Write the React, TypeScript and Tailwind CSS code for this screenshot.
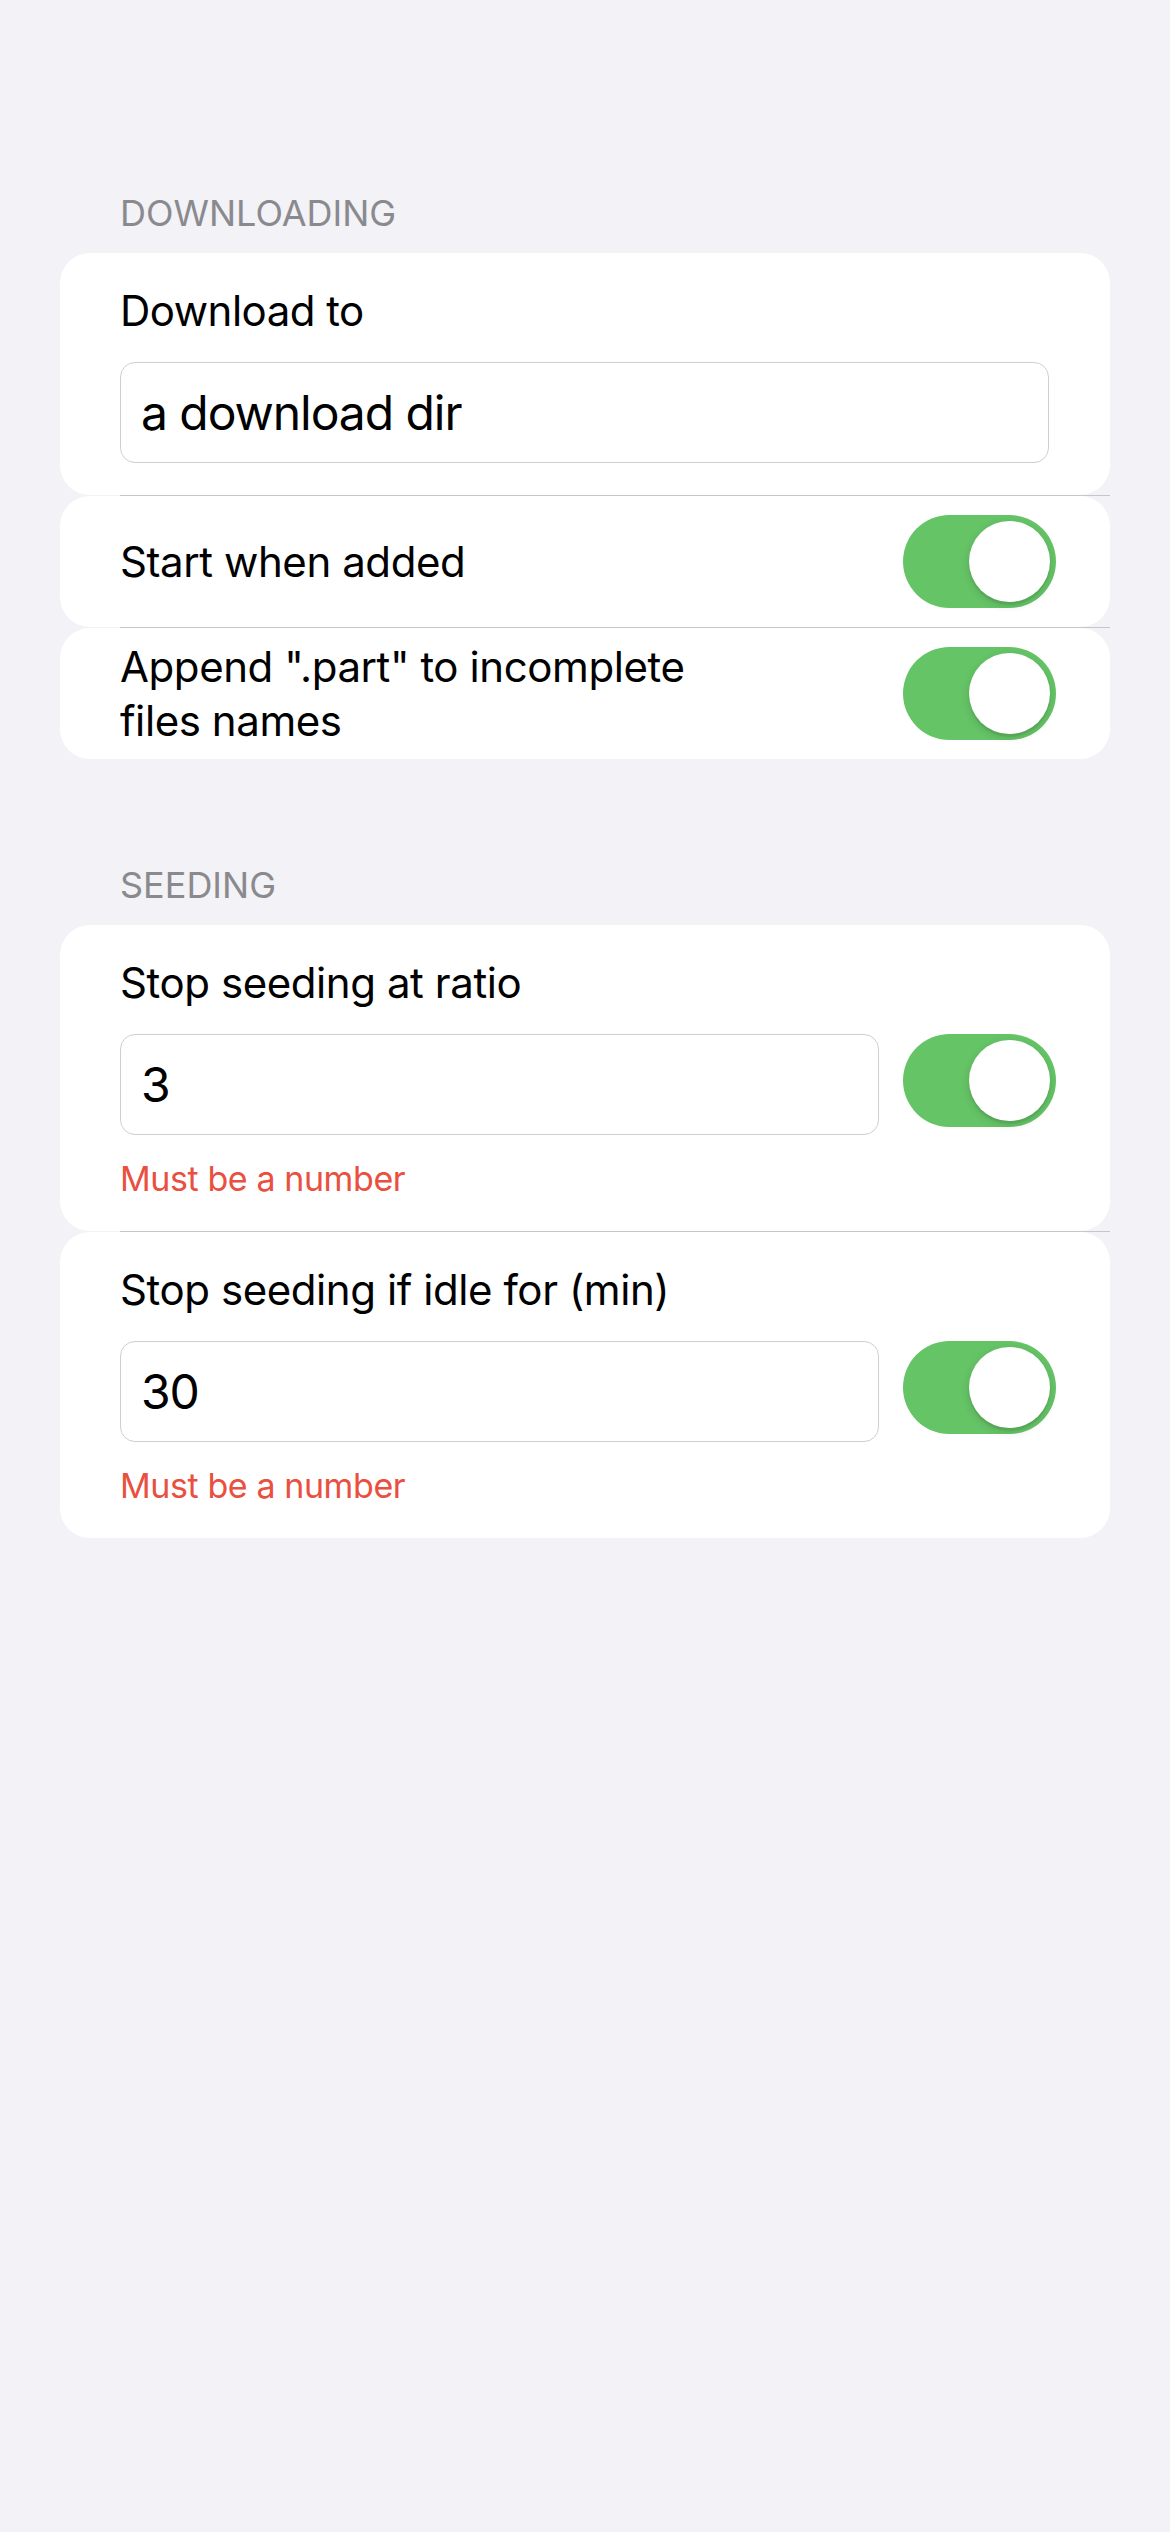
import React from 'react';

const FONT = "font-['Inter','Noto_Sans',sans-serif]";

function SectionHeader({ title }: { title: string }) {
    return (
        <div className="pl-[60px] mb-[18px] text-[36px] leading-[44px] text-[#8a8a8e] uppercase">
            {title}
        </div>
    );
}

function Separator() {
    return <div className="h-px ml-[60px] bg-[#c6c6c8]" />;
}

function Toggle() {
    return (
        <div className="w-[153px] h-[93px] shrink-0 rounded-full bg-[#65c466] p-[6px] flex justify-end">
            <div className="w-[81px] h-[81px] rounded-full bg-white shadow-[0_3px_8px_rgba(0,0,0,0.15),0_3px_1px_rgba(0,0,0,0.06)]" />
        </div>
    );
}

function TextBox({ value, className = '' }: { value: string; className?: string }) {
    return (
        <div
            className={`h-[101px] rounded-[15px] border border-[#cfcfd3] px-[20px] flex items-center text-[48px] leading-[58px] tracking-[-0.022em] text-black ${className}`}
        >
            {value}
        </div>
    );
}

function SwitchRow({ label }: { label: string }) {
    return (
        <div className="h-[131px] rounded-[30px] bg-white pl-[60px] pr-[54px] flex items-center justify-between">
            <div className="max-w-[620px] text-[42px] leading-[54px] tracking-[-0.01em] text-black">{label}</div>
            <Toggle />
        </div>
    );
}

function NumberRow({ label, value, error }: { label: string; value: string; error: string }) {
    return (
        <div className="rounded-[30px] bg-white pl-[60px] pr-[54px] pt-[33px] pb-[32px]">
            <div className="text-[42px] leading-[50px] tracking-[-0.01em] text-black">{label}</div>
            <div className="mt-[26px] flex items-start gap-[24px]">
                <TextBox value={value} className="flex-1" />
                <Toggle />
            </div>
            <div className="mt-[23px] text-[34px] leading-[41px] tracking-[-0.012em] text-[#e9503f]">{error}</div>
        </div>
    );
}

export default function App() {
    return (
        <div className={`min-h-screen bg-[#f2f2f7] px-[60px] pt-[191px] ${FONT}`}>
            {/* Downloading */}
            <SectionHeader title="Downloading" />
            <div className="rounded-[30px] bg-white pl-[60px] pr-[54px] pt-[33px] pb-[32px]">
                <div className="text-[42px] leading-[50px] tracking-[-0.012em] text-black">Download to</div>
                <TextBox value="a download dir" className="mt-[26px] mr-[7px]" />
            </div>
            <Separator />
            <SwitchRow label="Start when added" />
            <Separator />
            <SwitchRow label={'Append ".part" to incomplete files names'} />

            {/* Seeding */}
            <div className="mt-[104px]">
                <SectionHeader title="Seeding" />
            </div>
            <NumberRow label="Stop seeding at ratio" value="3" error="Must be a number" />
            <Separator />
            <NumberRow label="Stop seeding if idle for (min)" value="30" error="Must be a number" />
        </div>
    );
}
